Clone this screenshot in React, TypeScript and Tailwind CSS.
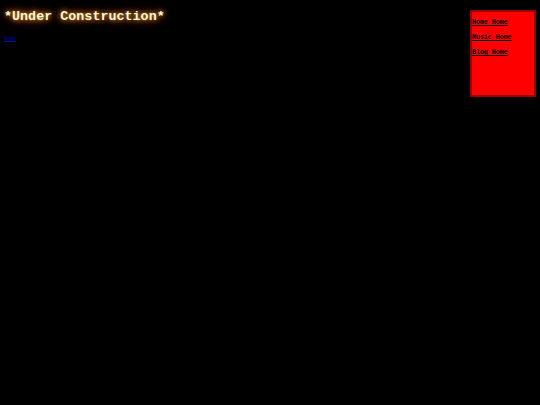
import React from "react";

export default function App() {
  return (
    <div className="w-[540px] h-[405px] bg-black overflow-hidden relative" style={{ fontFamily: '"Liberation Mono", monospace' }}>
      <div className="flex justify-between">
        <div className="pl-[4px] pt-[9px]">
          <h1
            className="text-[13.4px] leading-[16px] font-bold text-[#fff8e0] m-0"
            style={{ textShadow: "0 0 5px #ff9900, 0 0 10px #b35c00, 0 0 16px #663300" }}
          >
            *Under Construction*
          </h1>
          <a href="#" className="block mt-[11px] text-[5px] leading-[6px] text-[#0000bb] underline">
            Home
          </a>
        </div>
        <div className="mt-[10px] mr-[4px] w-[66px] h-[87px] bg-[#ff0000] border-2 border-[#990000] flex flex-col pt-[7px] gap-[8px]">
          {["Home Home", "Music Home", "Blog Home"].map((t) => (
            <a key={t} href="#" className="text-[6.6px] leading-[7px] font-bold text-black underline">
              {t}
            </a>
          ))}
        </div>
      </div>
    </div>
  );
}
